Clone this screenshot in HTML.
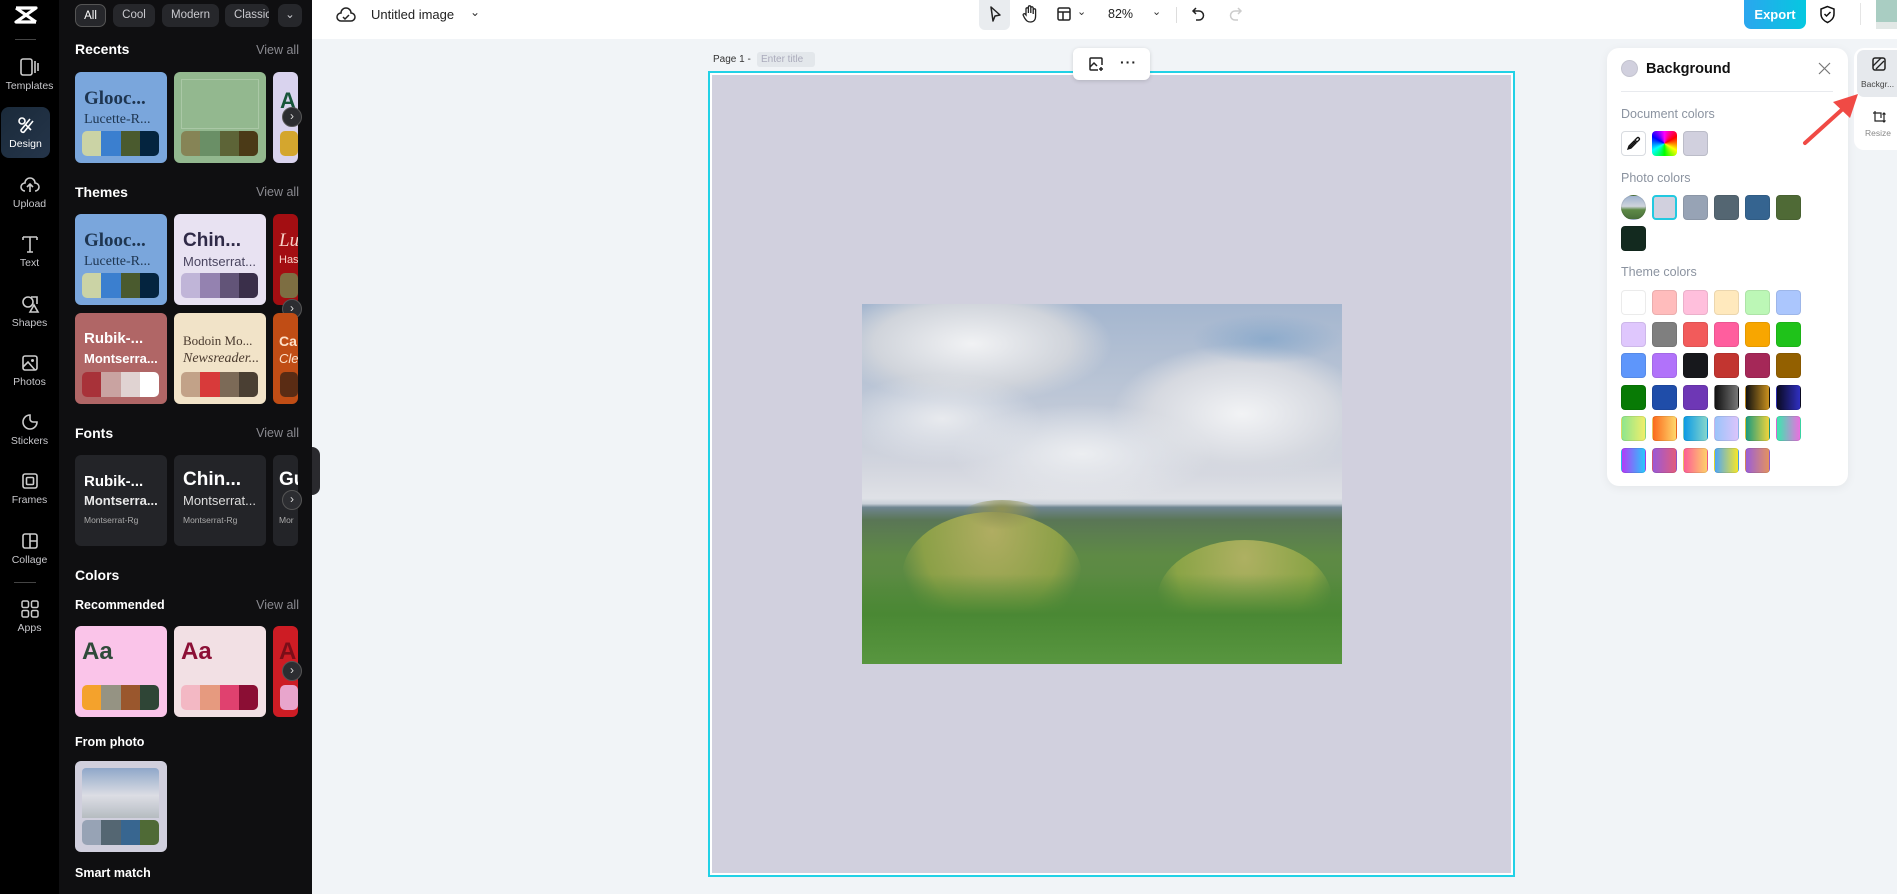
<!DOCTYPE html>
<html><head><meta charset="utf-8"><style>
*{box-sizing:border-box;margin:0;padding:0}
body{width:1897px;height:894px;overflow:hidden;font-family:"Liberation Sans",sans-serif;background:#f1f4f7;position:relative}
.a{position:absolute}
.rail{left:0;top:0;width:59px;height:894px;background:#000}
.nav{position:absolute;left:0;width:59px;text-align:center;color:#c8c8cc;font-size:10.5px}
.nav svg{display:block;margin:0 auto 3px}
.panel{left:59px;top:0;width:253px;height:894px;background:#0f0f11;overflow:hidden}
.chip{position:absolute;top:4px;height:23px;border-radius:7px;background:#26272b;color:#c9c9ce;font-size:11.5px;line-height:23px;text-align:center}
.h{position:absolute;color:#fff;font-weight:bold;font-size:14px}
.va{position:absolute;right:13px;color:#8a8a90;font-size:12.5px}
.card{position:absolute;width:92px;height:91px;border-radius:6px;overflow:hidden}
.pal{position:absolute;left:7px;top:59px;width:77px;height:25px;border-radius:5px;overflow:hidden;display:flex}
.pal i{flex:1}
.t1{position:absolute;left:9px;top:16px;font-size:19px;white-space:nowrap}
.t2{position:absolute;left:9px;top:40px;font-size:13px;white-space:nowrap}
.arr{position:absolute;width:20px;height:20px;border-radius:50%;background:#2c2d31;border:1px solid #555;color:#ddd;font-size:12px;line-height:17px;text-align:center}
.top{left:312px;top:0;width:1585px;height:39px;background:#fff}
.sw{position:absolute;width:25px;height:25px;border-radius:4px;border:1px solid rgba(0,0,0,.08)}
.lbl{position:absolute;left:14px;color:#8b93a0;font-size:12.5px}
.cl{position:absolute;border-radius:50%}
</style></head><body>
<div class="a rail"></div>
<svg class="a" style="left:14px;top:5px" width="24" height="20" viewBox="0 0 24 20"><path d="M2 3h20L2 17h20M2 3l20 14" stroke="#fff" stroke-width="3.2" fill="none" stroke-linejoin="round"/></svg>
<div class="a" style="left:15px;top:39px;width:21px;height:1px;background:#444"></div>
<div class="nav" style="top:57px"><svg width="22" height="20" viewBox="0 0 22 20"><rect x="2" y="2" width="11" height="16" rx="2" fill="none" stroke="#ccc" stroke-width="1.6"/><path d="M16 4v12M19 6v8" stroke="#ccc" stroke-width="1.6"/></svg>Templates</div>
<div class="a" style="left:1px;top:107px;width:49px;height:51px;border-radius:8px;background:linear-gradient(135deg,#1a2a3a,#25354a)"></div>
<div class="nav" style="top:115px;color:#fff;width:51px"><svg width="20" height="20" viewBox="0 0 20 20"><circle cx="6" cy="6" r="3" fill="none" stroke="#fff" stroke-width="1.6"/><path d="M9 9l6 6M14 4l-9 11a2 2 0 0 0 3 2l9-11" fill="none" stroke="#fff" stroke-width="1.6"/></svg>Design</div>
<div class="nav" style="top:175px"><svg width="22" height="20" viewBox="0 0 22 20"><path d="M6 16a4 4 0 0 1 0-8 5 5 0 0 1 10 0 4 4 0 0 1 0 8M11 17v-7M8 12l3-3 3 3" fill="none" stroke="#ccc" stroke-width="1.6"/></svg>Upload</div>
<div class="nav" style="top:234px"><svg width="20" height="20" viewBox="0 0 20 20"><path d="M3 3h14M10 3v15M7 18h6M3 3v3M17 3v3" fill="none" stroke="#ccc" stroke-width="1.6"/></svg>Text</div>
<div class="nav" style="top:294px"><svg width="20" height="20" viewBox="0 0 20 20"><circle cx="8" cy="8" r="5" fill="none" stroke="#ccc" stroke-width="1.6"/><path d="M11 3h6v7M10 18l4-7 4 7z" fill="none" stroke="#ccc" stroke-width="1.6"/></svg>Shapes</div>
<div class="nav" style="top:353px"><svg width="20" height="20" viewBox="0 0 20 20"><rect x="3" y="3" width="14" height="14" rx="2" fill="none" stroke="#ccc" stroke-width="1.6"/><circle cx="12.5" cy="7.5" r="1.5" fill="#ccc"/><path d="M3 14l5-5 7 8" fill="none" stroke="#ccc" stroke-width="1.6"/></svg>Photos</div>
<div class="nav" style="top:412px"><svg width="20" height="20" viewBox="0 0 20 20"><path d="M10 3a7 7 0 1 0 7 7h-4a3 3 0 0 1-3-3z" fill="none" stroke="#ccc" stroke-width="1.6"/></svg>Stickers</div>
<div class="nav" style="top:471px"><svg width="20" height="20" viewBox="0 0 20 20"><rect x="3" y="3" width="14" height="14" rx="2" fill="none" stroke="#ccc" stroke-width="1.6"/><rect x="6.5" y="6.5" width="7" height="7" rx="1" fill="none" stroke="#ccc" stroke-width="1.6"/></svg>Frames</div>
<div class="nav" style="top:531px"><svg width="20" height="20" viewBox="0 0 20 20"><rect x="3" y="3" width="14" height="14" rx="2" fill="none" stroke="#ccc" stroke-width="1.6"/><path d="M10 3v14M10 10h7" stroke="#ccc" stroke-width="1.6"/></svg>Collage</div>
<div class="a" style="left:14px;top:582px;width:22px;height:1px;background:#444"></div>
<div class="nav" style="top:599px"><svg width="20" height="20" viewBox="0 0 20 20"><rect x="2" y="2" width="6.5" height="6.5" rx="1.5" fill="none" stroke="#ccc" stroke-width="1.5"/><rect x="11.5" y="2" width="6.5" height="6.5" rx="1.5" fill="none" stroke="#ccc" stroke-width="1.5"/><rect x="2" y="11.5" width="6.5" height="6.5" rx="1.5" fill="none" stroke="#ccc" stroke-width="1.5"/><rect x="11.5" y="11.5" width="6.5" height="6.5" rx="1.5" fill="none" stroke="#ccc" stroke-width="1.5"/></svg>Apps</div>

<div class="a panel">
<div class="chip" style="left:16px;width:31px;border:1px solid #555;color:#fff">All</div>
<div class="chip" style="left:54px;width:42px">Cool</div>
<div class="chip" style="left:103px;width:57px">Modern</div>
<div class="chip" style="left:166px;width:44px;overflow:hidden;text-align:left;padding-left:9px">Classic</div>
<div class="chip" style="left:219px;width:24px">⌄</div>

<div class="h" style="left:16px;top:41px">Recents</div><div class="va" style="top:43px">View all</div>
<div class="card" style="left:16px;top:72px;background:#7aa6dc"><div class="t1" style="font-family:'Liberation Serif',serif;color:#1e3550;font-weight:bold">Glooc...</div><div class="t2" style="font-family:'Liberation Serif',serif;color:#1e3550;font-size:14px">Lucette-R...</div><div class="pal"><i style="background:#cbd3a5"></i><i style="background:#3b7fcf"></i><i style="background:#4a5a2e"></i><i style="background:#04243f"></i></div></div>
<div class="card" style="left:115px;top:72px;background:#93b88f"><div class="a" style="left:7px;top:7px;width:78px;height:50px;border:1px solid #aac8a6"></div><div class="pal"><i style="background:#868456"></i><i style="background:#6a8f66"></i><i style="background:#5d6437"></i><i style="background:#4b3a17"></i></div></div>
<div class="card" style="left:214px;top:72px;background:#d9d3ee;width:25px"><div class="t1" style="left:7px;color:#17553a;font-weight:bold;font-size:22px">A</div><div class="pal" style="width:18px"><i style="background:#d4a62e"></i></div></div>
<div class="arr" style="left:223px;top:107px">›</div>

<div class="h" style="left:16px;top:184px">Themes</div><div class="va" style="top:185px">View all</div>
<div class="card" style="left:16px;top:214px;background:#7aa6dc"><div class="t1" style="font-family:'Liberation Serif',serif;color:#1e3550;font-weight:bold">Glooc...</div><div class="t2" style="font-family:'Liberation Serif',serif;color:#1e3550;font-size:14px">Lucette-R...</div><div class="pal"><i style="background:#cbd3a5"></i><i style="background:#3b7fcf"></i><i style="background:#4a5a2e"></i><i style="background:#04243f"></i></div></div>
<div class="card" style="left:115px;top:214px;background:#e8e2f2"><div class="t1" style="color:#2f2a48;font-weight:bold">Chin...</div><div class="t2" style="color:#4a4560">Montserrat...</div><div class="pal"><i style="background:#c0b5d8"></i><i style="background:#9482b0"></i><i style="background:#625478"></i><i style="background:#3a2f4a"></i></div></div>
<div class="card" style="left:214px;top:214px;background:#a30e12;width:25px"><div class="t1" style="left:6px;color:#f7d1c7;font-style:italic;font-family:'Liberation Serif',serif">Lu</div><div class="t2" style="left:6px;color:#f7d1c7;font-size:11px">Has</div><div class="pal" style="width:18px"><i style="background:#7d6e42"></i></div></div>
<div class="arr" style="left:223px;top:299px">›</div>
<div class="card" style="left:16px;top:313px;background:#b06666"><div class="t1" style="color:#fff;font-weight:bold;font-size:15px;top:17px">Rubik-...</div><div class="t2" style="color:#fff;font-weight:bold;top:38px">Montserra...</div><div class="pal"><i style="background:#a83239"></i><i style="background:#c9a3a1"></i><i style="background:#e0d3d2"></i><i style="background:#fff"></i></div></div>
<div class="card" style="left:115px;top:313px;background:#f1e3c8"><div class="t1" style="color:#4a3a2e;font-family:'Liberation Serif',serif;font-size:13px;top:20px">Bodoin Mo...</div><div class="t2" style="color:#4a3a2e;font-family:'Liberation Serif',serif;font-style:italic;font-size:14px;top:38px">Newsreader...</div><div class="pal"><i style="background:#c2a288"></i><i style="background:#d83a3a"></i><i style="background:#7c6a57"></i><i style="background:#4a3f33"></i></div></div>
<div class="card" style="left:214px;top:313px;background:#c04d15;width:25px"><div class="t1" style="left:6px;color:#fde0c8;font-weight:bold;font-size:14px;top:20px">Ca</div><div class="t2" style="left:6px;color:#fde0c8;font-style:italic;top:38px">Cle</div><div class="pal" style="width:18px"><i style="background:#5a2c14"></i></div></div>

<div class="h" style="left:16px;top:425px">Fonts</div><div class="va" style="top:426px">View all</div>
<div class="card" style="left:16px;top:455px;background:#232428"><div class="t1" style="color:#fff;font-weight:bold;font-size:15px;top:18px">Rubik-...</div><div class="t2" style="color:#e8e8e8;font-weight:bold;top:38px">Montserra...</div><div class="t2" style="color:#aaa;font-size:8.5px;top:60px">Montserrat-Rg</div></div>
<div class="card" style="left:115px;top:455px;background:#232428"><div class="t1" style="color:#fff;font-weight:bold;top:14px">Chin...</div><div class="t2" style="color:#ddd;top:38px">Montserrat...</div><div class="t2" style="color:#aaa;font-size:8.5px;top:60px">Montserrat-Rg</div></div>
<div class="card" style="left:214px;top:455px;background:#232428;width:25px"><div class="t1" style="left:6px;color:#fff;font-weight:bold;top:14px">Gu</div><div class="t2" style="left:6px;color:#aaa;font-size:8.5px;top:60px">Mor</div></div>
<div class="arr" style="left:223px;top:490px">›</div>

<div class="h" style="left:16px;top:567px">Colors</div>
<div class="h" style="left:16px;top:598px;font-size:12.5px">Recommended</div><div class="va" style="top:598px">View all</div>
<div class="card" style="left:16px;top:626px;background:#fac4e9"><div class="t1" style="color:#2f4a3a;font-weight:bold;font-size:24px;top:12px;left:7px">Aa</div><div class="pal"><i style="background:#f4a22c"></i><i style="background:#959383"></i><i style="background:#9a572d"></i><i style="background:#2f4536"></i></div></div>
<div class="card" style="left:115px;top:626px;background:#f2e0e4"><div class="t1" style="color:#8c1036;font-weight:bold;font-size:24px;top:12px;left:7px">Aa</div><div class="pal"><i style="background:#f3b8c4"></i><i style="background:#e69a7f"></i><i style="background:#e0416f"></i><i style="background:#8b0e34"></i></div></div>
<div class="card" style="left:214px;top:626px;background:#cd1c24;width:25px"><div class="t1" style="color:#7a0e18;font-weight:bold;font-size:24px;top:12px;left:6px">A</div><div class="pal" style="width:18px"><i style="background:#e8a5cc"></i></div></div>
<div class="arr" style="left:223px;top:661px">›</div>

<div class="h" style="left:16px;top:735px;font-size:12.5px">From photo</div>
<div class="card" style="left:16px;top:761px;background:#d0cfdd"><div class="a" style="left:7px;top:7px;width:77px;height:50px;border-radius:4px 4px 0 0;background:linear-gradient(#8fa7c9,#dcdde4 55%,#c7cbd2 80%,#b5bcc0)"></div><div class="pal"><i style="background:#97a3b5"></i><i style="background:#546672"></i><i style="background:#386690"></i><i style="background:#4f6a36"></i></div></div>
<div class="h" style="left:16px;top:866px;font-size:12.5px">Smart match</div>
</div>
<div class="a" style="left:312px;top:447px;width:8px;height:48px;background:#2a2a2e;border-radius:0 8px 8px 0"></div>

<div class="a top"></div>
<svg class="a" style="left:336px;top:6px" width="20" height="18" viewBox="0 0 20 18"><path d="M5 15a4 4 0 0 1 0-8 5 5 0 0 1 10 0 4 4 0 0 1 0 8z M7 11l2 2 4-4" fill="none" stroke="#222" stroke-width="1.5"/></svg>
<div class="a" style="left:371px;top:7px;font-size:13px;color:#222">Untitled image</div>
<div class="a" style="left:470px;top:5px;font-size:12px;color:#333">⌄</div>
<div class="a" style="left:979px;top:0;width:31px;height:30px;background:#e9ecef;border-radius:0 0 6px 6px"></div>
<svg class="a" style="left:986px;top:5px" width="18" height="18" viewBox="0 0 18 18"><path d="M5 2l9 8-5 1-2 5z" fill="none" stroke="#222" stroke-width="1.5" stroke-linejoin="round"/></svg>
<svg class="a" style="left:1020px;top:4px" width="20" height="20" viewBox="0 0 20 20"><path d="M6 11V5a1.2 1.2 0 0 1 2.4 0v4V3a1.2 1.2 0 0 1 2.4 0v6V4a1.2 1.2 0 0 1 2.4 0v6V6a1.2 1.2 0 0 1 2.4 0v6c0 4-2 6-5 6s-4-1-6-4l-1.5-3a1.2 1.2 0 0 1 2-1z" fill="none" stroke="#222" stroke-width="1.3"/></svg>
<svg class="a" style="left:1056px;top:6px" width="16" height="16" viewBox="0 0 16 16"><rect x="2" y="2" width="12" height="12" rx="1.5" fill="none" stroke="#222" stroke-width="1.5"/><path d="M2 6h12M7 6v8" stroke="#222" stroke-width="1.5"/></svg>
<div class="a" style="left:1077px;top:5px;font-size:11px;color:#333">⌄</div>
<div class="a" style="left:1108px;top:7px;font-size:12.5px;color:#222">82%</div>
<div class="a" style="left:1152px;top:5px;font-size:11px;color:#333">⌄</div>
<div class="a" style="left:1176px;top:7px;width:1px;height:16px;background:#ddd"></div>
<svg class="a" style="left:1190px;top:5px" width="18" height="18" viewBox="0 0 18 18"><path d="M6 3L3 6l3 3M3 6h6a4.5 4.5 0 0 1 0 9H6" fill="none" stroke="#222" stroke-width="1.5"/></svg>
<svg class="a" style="left:1226px;top:5px" width="18" height="18" viewBox="0 0 18 18"><path d="M12 3l3 3-3 3M15 6H9a4.5 4.5 0 0 0 0 9h3" fill="none" stroke="#ccc" stroke-width="1.5"/></svg>
<div class="a" style="left:1744px;top:0;width:62px;height:29px;border-radius:0 0 7px 7px;background:linear-gradient(90deg,#2ba6ee,#05c8e0);color:#fff;font-weight:bold;font-size:13px;line-height:29px;text-align:center">Export</div>
<svg class="a" style="left:1819px;top:5px" width="17" height="19" viewBox="0 0 17 19"><path d="M8.5 1.5L2 4v5c0 4 3 7 6.5 8.5C12 16 15 13 15 9V4z M5.5 9l2 2 4-4" fill="none" stroke="#111" stroke-width="1.5"/></svg>
<div class="a" style="left:1860px;top:3px;width:1px;height:22px;background:#e5e5e5"></div>
<div class="a" style="left:1876px;top:0;width:21px;height:22px;background:#a9cdc2"></div>
<div class="a" style="left:1876px;top:22px;width:21px;height:7px;background:#e2e8e6"></div>

<div class="a" style="left:713px;top:54px;font-size:10px;color:#333">Page 1 -</div>
<div class="a" style="left:757px;top:52px;width:58px;height:15px;background:#e3e7eb;border-radius:3px;font-size:10px;color:#aab;line-height:15px;padding-left:4px">Enter title</div>
<div class="a" style="left:708px;top:71px;width:807px;height:806px;border:2px solid #22d1e6;background:#fff;padding:2px"><div style="width:100%;height:100%;background:#d1d0de"></div></div>
<div class="a" style="left:1073px;top:48px;width:77px;height:32px;background:#fff;border-radius:6px;box-shadow:0 1px 4px rgba(0,0,0,.15)"></div>
<svg class="a" style="left:1088px;top:56px" width="16" height="16" viewBox="0 0 16 16"><path d="M10 14H3a1 1 0 0 1-1-1V3a1 1 0 0 1 1-1h10a1 1 0 0 1 1 1v6M2 11l4-4 3 3M13 11v4M11 13h4" fill="none" stroke="#222" stroke-width="1.5"/></svg>
<div class="a" style="left:1120px;top:54px;font-size:14px;font-weight:bold;color:#222;letter-spacing:1px">···</div>

<!-- photo -->
<div class="a" style="left:862px;top:304px;width:480px;height:360px;overflow:hidden;background:linear-gradient(#a4b6cf 0%,#bcc6d6 25%,#d2d5de 45%,#dfe1e6 54%,#c9d0d8 55.5%,#6f8590 56.5%,#5a7656 60%,#5e8a45 70%,#4f8a36 100%)">
<div class="cl" style="left:-30px;top:-20px;width:280px;height:120px;background:radial-gradient(closest-side,#f1f2f4,#d0d4db 70%,rgba(205,210,218,0))"></div>
<div class="cl" style="left:250px;top:40px;width:260px;height:140px;background:radial-gradient(closest-side,#f2f3f5,#d6d9e0 70%,rgba(214,217,224,0))"></div>
<div class="cl" style="left:-20px;top:70px;width:200px;height:90px;background:radial-gradient(closest-side,#e8eaee,rgba(220,223,230,0))"></div>
<div class="cl" style="left:90px;top:100px;width:260px;height:100px;background:radial-gradient(closest-side,#eceef1,rgba(220,223,230,0))"></div>
<div class="cl" style="left:330px;top:10px;width:150px;height:50px;background:radial-gradient(closest-side,rgba(120,160,200,.6),rgba(120,160,200,0))"></div>
<div class="a" style="left:40px;top:208px;width:180px;height:130px;border-radius:50% 50% 0 0;background:radial-gradient(ellipse at 50% 15%,#b0ad62,#8ba047 55%,rgba(90,140,50,0) 75%)"></div>
<div class="a" style="left:295px;top:236px;width:175px;height:120px;border-radius:50% 50% 0 0;background:radial-gradient(ellipse at 50% 15%,#aeb062,#8aa446 55%,rgba(90,140,50,0) 75%)"></div>
<div class="a" style="left:100px;top:196px;width:80px;height:30px;border-radius:50% 50% 0 0;background:radial-gradient(ellipse at 50% 30%,#8e9154,rgba(90,120,70,0) 70%)"></div>
<div class="a" style="left:0;top:270px;width:480px;height:90px;background:linear-gradient(rgba(70,130,45,0),#4a8834 45%,#58963f)"></div>
</div>

<div class="a" style="left:1607px;top:48px;width:241px;height:438px;background:#fff;border-radius:12px;box-shadow:0 2px 10px rgba(0,0,0,.06)">
<div class="a" style="left:14px;top:12px;width:17px;height:17px;border-radius:50%;background:#d1d0de;border:1px solid #c4c4d0"></div>
<div class="a" style="left:39px;top:13px;font-weight:bold;font-size:14.5px;color:#111">Background</div>
<svg class="a" style="left:211px;top:14px" width="13" height="13" viewBox="0 0 13 13"><path d="M1 1l11 11M12 1L1 12" stroke="#777" stroke-width="1.2"/></svg>
<div class="a" style="left:14px;top:43px;width:212px;height:1px;background:#e8eaee"></div>
<div class="lbl" style="top:59px">Document colors</div>
<div class="sw" style="left:14px;top:83px;background:#fff;border-color:#d8dbe0"></div>
<svg class="a" style="left:19px;top:88px" width="15" height="15" viewBox="0 0 15 15"><path d="M3 12l6-6M2 13l1-3 5-5 2 2-5 5z M9 4l2-2a1.4 1.4 0 0 1 2 2l-2 2z" fill="none" stroke="#111" stroke-width="1.3"/></svg>
<div class="sw" style="left:45px;top:83px;background:conic-gradient(from 0deg,#f0f,#f00,#ff0,#0f0,#0ff,#00f,#f0f);border:none"></div>
<div class="sw" style="left:76px;top:83px;background:#d1d0de;border-color:#bbbcc8"></div>
<div class="lbl" style="top:123px">Photo colors</div>
<div class="sw" style="left:14px;top:147px;border-radius:50%;background:linear-gradient(#9fb3cf,#cfd4dc 45%,#5e8a47 60%,#49703a)"></div>
<div class="sw" style="left:45px;top:147px;background:#d1d0de;border:2px solid #22c9e0"></div>
<div class="sw" style="left:76px;top:147px;background:#97a3b5"></div>
<div class="sw" style="left:107px;top:147px;background:#546672"></div>
<div class="sw" style="left:138px;top:147px;background:#356490"></div>
<div class="sw" style="left:169px;top:147px;background:#4f6a36"></div>
<div class="sw" style="left:14px;top:178px;background:#132a1f"></div>
<div class="lbl" style="top:217px">Theme colors</div>
<div id="tc"></div>
</div>
<div class="a" style="left:1854px;top:48px;width:43px;height:102px;background:#fff;border-radius:10px 0 0 10px"></div>
<div class="a" style="left:1857px;top:50px;width:40px;height:47px;background:#e6e9ed;border-radius:7px 0 0 7px"></div>
<svg class="a" style="left:1872px;top:57px" width="14" height="14" viewBox="0 0 14 14"><rect x="1" y="1" width="12" height="12" rx="2" fill="none" stroke="#222" stroke-width="1.5"/><path d="M1 9l8-8M4 12l8-8" stroke="#222" stroke-width="1.3"/></svg>
<div class="a" style="left:1861px;top:79px;font-size:8.5px;color:#444">Backgr...</div>
<svg class="a" style="left:1872px;top:110px" width="14" height="14" viewBox="0 0 14 14"><path d="M3 1v10h8M1 3h8v5M12 3v9M10.5 10.5L12 12l1.5-1.5M10.5 4.5L12 3l1.5 1.5" fill="none" stroke="#222" stroke-width="1.2"/></svg>
<div class="a" style="left:1865px;top:128px;font-size:8.5px;color:#888">Resize</div>
<svg class="a" style="left:1800px;top:86px" width="62" height="62" viewBox="0 0 62 62"><path d="M5 57L46 20" stroke="#f04a45" stroke-width="4" stroke-linecap="round"/><path d="M58 8L33 16 50 32z" fill="#f04a45"/></svg>
<script>
var c=[["#fff","#ffbcbc","#ffbfdc","#ffe9bd","#bcf7b6","#abc6fd"],["#dfc7fd","#7f7f7f","#f25b5b","#ff5e9e","#f8a600","#1fc21a"],["#5e96fb","#b172fa","#17181c","#c23530","#a52858","#936000"],["#087a05","#1f4da9","#6e37b5","linear-gradient(90deg,#111,#777)","linear-gradient(90deg,#111,#c9901d)","linear-gradient(90deg,#0a0a22,#2f2fc0)"],["linear-gradient(90deg,#8ee68e,#f0ee6a)","linear-gradient(90deg,#fb6a1d,#fed76b)","linear-gradient(90deg,#0b9ae6,#86d6cb)","linear-gradient(90deg,#9bc4fa,#dbc4fb)","linear-gradient(90deg,#1a9a7f,#f0d43a)","linear-gradient(90deg,#3ae8ae,#ec6ee0)"],["linear-gradient(90deg,#b23cf8,#28c8fc)","linear-gradient(90deg,#9a59d6,#e25c7d)","linear-gradient(90deg,#fd5e95,#fed069)","linear-gradient(90deg,#4fa6f6,#f6e729)","linear-gradient(90deg,#9a5ed8,#e4925f)"]];
var h="",ys=[242,274,305,337,368,400];
c.forEach(function(r,i){r.forEach(function(v,j){h+='<div class="sw" style="left:'+(14+31*j)+'px;top:'+ys[i]+'px;background:'+v+'"></div>'})});
document.getElementById("tc").innerHTML=h;
</script>
</body></html>
